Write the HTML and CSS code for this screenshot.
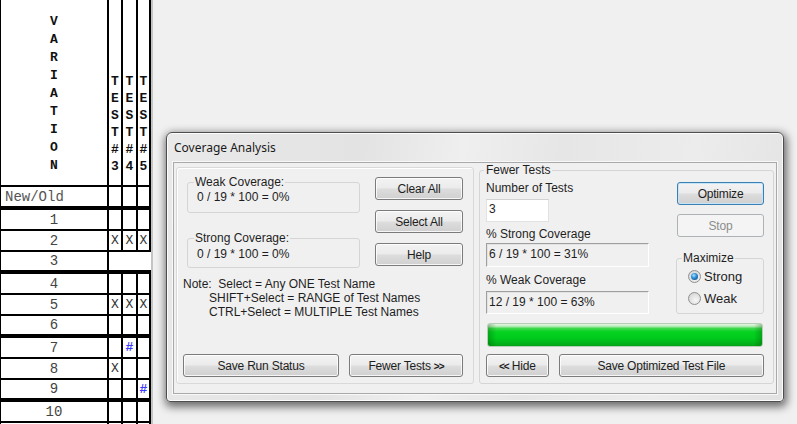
FILE: index.html
```html
<!DOCTYPE html>
<html>
<head>
<meta charset="utf-8">
<title>Coverage Analysis</title>
<link rel="stylesheet" href="styles.css">
</head>
<body>
<div class="screen">
  <table class="grid">
    <colgroup><col class="c-var"><col class="c-t1"><col class="c-t2"><col class="c-t3"></colgroup>
    <tr class="hdr">
      <th class="var">V<br>A<br>R<br>I<br>A<br>T<br>I<br>O<br>N</th>
      <th class="test">T<br>E<br>S<br>T<br>#<br>3</th>
      <th class="test">T<br>E<br>S<br>T<br>#<br>4</th>
      <th class="test">T<br>E<br>S<br>T<br>#<br>5</th>
    </tr>
    <tr class="r-head"><td class="label">New/Old</td><td></td><td></td><td></td></tr>
    <tr class="r-a"><td class="num">1</td><td></td><td></td><td></td></tr>
    <tr class="r-b"><td class="num">2</td><td class="x">X</td><td class="x">X</td><td class="x">X</td></tr>
    <tr class="r-c"><td class="num">3</td><td colspan="3" class="merged"></td></tr>
    <tr class="r-a"><td class="num">4</td><td></td><td></td><td></td></tr>
    <tr class="r-b"><td class="num">5</td><td class="x">X</td><td class="x">X</td><td class="x">X</td></tr>
    <tr class="r-c"><td class="num">6</td><td></td><td></td><td></td></tr>
    <tr class="r-a"><td class="num">7</td><td></td><td class="h">#</td><td></td></tr>
    <tr class="r-b"><td class="num">8</td><td class="x">X</td><td></td><td></td></tr>
    <tr class="r-c"><td class="num">9</td><td></td><td></td><td class="h">#</td></tr>
    <tr class="r-a"><td class="num">10</td><td></td><td></td><td></td></tr>
    <tr class="r-b"><td class="num"></td><td></td><td></td><td></td></tr>
  </table>

  <div class="dialog">
    <div class="titlebar">Coverage Analysis</div>
    <div class="client">
      <div class="panel">
        <div class="panel-top">
          <div class="cov-col">
            <fieldset class="cov weak"><legend>Weak Coverage:</legend><div class="val">0 / 19 * 100 = 0%</div></fieldset>
            <fieldset class="cov strong"><legend>Strong Coverage:</legend><div class="val">0 / 19 * 100 = 0%</div></fieldset>
          </div>
          <div class="btn-col">
            <button class="btn side">Clear All</button>
            <button class="btn side">Select All</button>
            <button class="btn side">Help</button>
          </div>
        </div>
        <div class="note">
          <div>Note:&nbsp; Select = Any ONE Test Name</div>
          <div class="ind">SHIFT+Select = RANGE of Test Names</div>
          <div class="ind">CTRL+Select = MULTIPLE Test Names</div>
        </div>
        <div class="panel-bottom">
          <button class="btn save-run">Save Run Status</button>
          <button class="btn fewer">Fewer Tests <b class="chev">&gt;&gt;</b></button>
        </div>
      </div>

      <fieldset class="fewer-group">
        <legend>Fewer Tests</legend>
        <div class="fg-top">
          <div class="fg-left">
            <div class="lbl first">Number of Tests</div>
            <div class="input">3</div>
            <div class="lbl l2">% Strong Coverage</div>
            <div class="sunken s1">6 / 19 * 100 = 31%</div>
            <div class="lbl l3">% Weak Coverage</div>
            <div class="sunken s2">12 / 19 * 100 = 63%</div>
          </div>
          <div class="fg-right">
            <button class="btn optimize">Optimize</button>
            <button class="btn stop" disabled>Stop</button>
            <fieldset class="maximize">
              <legend>Maximize</legend>
              <div class="radio-row"><span class="radio on"></span><span>Strong</span></div>
              <div class="radio-row r2"><span class="radio"></span><span>Weak</span></div>
            </fieldset>
          </div>
        </div>
        <div class="progress"></div>
        <div class="fg-bottom">
          <button class="btn hide"><b class="chev">&lt;&lt;</b> Hide</button>
          <button class="btn save-opt">Save Optimized Test File</button>
        </div>
      </fieldset>
    </div>
  </div>
</div>
</body>
</html>
```

FILE: styles.css
```css
html, body {
  margin: 0;
  padding: 0;
}
body {
  width: 797px;
  height: 424px;
  overflow: hidden;
  background: #f0f0f0;
}
.screen {
  position: relative;
  width: 797px;
  height: 424px;
  overflow: hidden;
}

/* ---------- grid ---------- */
.grid {
  border-collapse: separate;
  border-spacing: 0;
  table-layout: fixed;
  width: 151px;
  box-shadow: 2px 0 0 #c4c4c4;
  font-family: "Liberation Mono", "Courier New", monospace;
}
.grid th, .grid td {
  box-sizing: border-box;
  padding: 0;
  background: #fff;
  border-right: 2px solid #000;
  border-bottom: 2px solid #000;
  text-align: center;
  overflow: hidden;
}
.grid th:first-child, .grid td:first-child {
  border-left: 1px solid #000;
}
.c-var { width: 109px; }
.c-t1 { width: 14px; }
.c-t2 { width: 15px; }
.c-t3 { width: 13px; }

.hdr { height: 187px; }
.hdr th {
  vertical-align: bottom;
  font-weight: bold;
  font-size: 13px;
  color: #111;
  padding-bottom: 10px;
}
.hdr th.var { line-height: 18px; }
.hdr th.test { line-height: 17px; }

.r-head { height: 23px; }
.r-head td { border-bottom-width: 4px; }
.r-a, .r-b { height: 21px; }
.r-c { height: 22px; }
.r-c td { border-bottom-width: 4px; }
.grid td.merged { border-right: none; }

.grid td.label {
  text-align: left;
  padding-left: 4px;
  font-size: 14px;
  color: #555;
  line-height: 18px;
}
.grid td.num {
  font-size: 14px;
  color: #444;
  line-height: 18px;
}
.grid td.x {
  font-size: 13px;
  color: #333;
}
.grid td.h {
  font-size: 13px;
  color: #3b3bff;
  font-weight: bold;
}

/* ---------- dialog window ---------- */
.dialog {
  position: absolute;
  left: 166px;
  top: 132px;
  width: 618px;
  height: 270px;
  box-sizing: border-box;
  border: 1px solid #4e4e4e;
  border-radius: 6px 6px 4px 4px;
  padding: 0 6px 7px 6px;
  background: linear-gradient(100deg, #e9e9e9 0%, #e3e3e3 30%, #efefef 45%, #e6e6e6 60%, #ececec 80%, #e2e2e2 100%);
  box-shadow: inset 0 0 0 1px rgba(255,255,255,0.85), 1px 3px 8px 2px rgba(0,0,0,0.55);
  font-family: "Liberation Sans", Arial, sans-serif;
  font-size: 12px;
  color: #1e1e1e;
}
.titlebar {
  height: 29px;
  line-height: 29px;
  padding-left: 1px;
  font-family: "Noto Sans", "Open Sans", sans-serif;
  font-size: 12px;
  color: #1a1a1a;
}
.client {
  box-sizing: border-box;
  height: 232px;
  border: 1px solid #a9a9a9;
  box-shadow: 0 0 0 1px #f8f8f8;
  background: #f0f0f0;
  padding: 4px 2px 0 2px;
  display: flex;
  align-items: flex-start;
  gap: 5px;
}

/* left panel */
.panel {
  box-sizing: border-box;
  width: 298px;
  height: 217px;
  border: 1px solid #d9d9d9;
  border-radius: 3px;
  box-shadow: inset 1px 1px 0 #fff;
  padding: 7px 6px 6px 6px;
  display: flex;
  flex-direction: column;
}
.panel-top {
  display: flex;
  align-items: flex-start;
}
.cov-col {
  margin-left: 4px;
  width: 173px;
}
fieldset {
  margin: 0;
  min-width: 0;
  border: 1px solid #d5d5d5;
  border-radius: 3px;
}
legend {
  line-height: 14px;
  color: #1e1e1e;
}
.cov {
  box-sizing: border-box;
  width: 173px;
  padding: 1px 0 7px 9px;
}
.cov legend {
  padding: 0 1px;
  margin-left: -3px;
}
.cov.weak { padding-bottom: 8px; }
.cov.strong { margin-top: 18px; padding-top: 2px; padding-bottom: 6px; }
.val {
  line-height: 14px;
  white-space: pre;
}
.btn-col {
  margin-left: 15px;
  margin-top: 2px;
  display: flex;
  flex-direction: column;
  gap: 10px;
}

.btn {
  box-sizing: border-box;
  height: 23px;
  border: 1px solid #7b7b7b;
  border-radius: 3px;
  background: linear-gradient(#f3f3f3 0%, #ebebeb 48%, #dddddd 52%, #d0d0d0 100%);
  box-shadow: inset 0 0 0 1px rgba(255,255,255,0.8);
  font-family: "Liberation Sans", Arial, sans-serif;
  font-size: 12px;
  color: #1e1e1e;
  padding: 0;
  margin: 0;
  letter-spacing: -0.2px;
}
.btn.side { width: 88px; }
.chev { font-size: 10px; letter-spacing: -1px; }

.note {
  margin-top: 9px;
  line-height: 14px;
}
.note .ind { padding-left: 26px; }
.panel-bottom {
  margin-top: auto;
  display: flex;
  gap: 10px;
}
.save-run { width: 156px; }
.fewer { width: 114px; }

/* right group */
.fewer-group {
  box-sizing: border-box;
  width: 295px;
  margin-top: -4px;
  padding: 0 9px 6px 6px;
}
.fewer-group > legend {
  padding: 0 2px;
  margin-left: -2px;
}
.fg-top {
  display: flex;
  justify-content: space-between;
  align-items: flex-start;
}
.fg-left {
  width: 163px;
  display: flex;
  flex-direction: column;
}
.lbl { line-height: 14px; }
.lbl.first { margin-top: 4px; }
.input {
  box-sizing: border-box;
  width: 63px;
  height: 23px;
  margin-top: 4px;
  background: #fff;
  border: 1px solid #e2e2e2;
  border-top-color: #d2d2d2;
  padding-left: 2px;
  line-height: 19px;
}
.lbl.l2 { margin-top: 5px; }
.sunken {
  box-sizing: border-box;
  width: 163px;
  border: 1px solid;
  border-color: #9f9f9f #ffffff #ffffff #9f9f9f;
  box-shadow: inset 1px 1px 0 #e3e3e3;
  padding-left: 2px;
  white-space: pre;
}
.sunken.s1 { margin-top: 2px; height: 24px; line-height: 21px; }
.lbl.l3 { margin-top: 6px; }
.sunken.s2 { margin-top: 4px; height: 23px; line-height: 20px; }

.fg-right {
  width: 88px;
  display: flex;
  flex-direction: column;
}
.optimize, .stop {
  width: 87px;
  margin-left: 1px;
}
.optimize {
  margin-top: 5px;
  border-color: #3c7fb1;
  box-shadow: inset 0 0 0 1px #c4e5f8;
}
.stop {
  margin-top: 9px;
  border-color: #adb2b5;
  background: #f4f4f4;
  box-shadow: none;
  color: #8d8d8d;
}
.maximize {
  box-sizing: border-box;
  width: 88px;
  margin-top: 14px;
  padding: 4px 0 8px 11px;
}
.maximize legend {
  padding: 0 1px;
  margin-left: -6px;
}
.radio-row {
  display: flex;
  align-items: center;
  gap: 3px;
  height: 14px;
  font-size: 13px;
}
.radio-row.r2 { margin-top: 8px; }
.radio {
  box-sizing: border-box;
  width: 13px;
  height: 13px;
  border-radius: 50%;
  border: 1px solid #8f8f8f;
  background: radial-gradient(circle at 60% 65%, #f7f7f7 0%, #dedede 60%, #cfcfcf 100%);
  position: relative;
  flex: none;
}
.radio.on::after {
  content: "";
  position: absolute;
  left: 2px;
  top: 2px;
  width: 7px;
  height: 7px;
  border-radius: 50%;
  background: radial-gradient(circle at 40% 35%, #b6e6ff 0%, #3a9be0 35%, #135e9c 75%, #0b3a66 100%);
}

.progress {
  box-sizing: border-box;
  width: 276px;
  height: 24px;
  margin-top: 9px;
  margin-left: 1px;
  border: 1px solid #b6cdb6;
  border-radius: 3px;
  background:
    linear-gradient(to right, rgba(0,60,0,0.28) 0%, rgba(0,60,0,0) 3%, rgba(0,60,0,0) 97%, rgba(0,60,0,0.28) 100%),
    linear-gradient(#e2f7e2 0%, #bdedbd 10%, #3fd84e 20%, #06d221 35%, #00cc1d 62%, #00b919 82%, #04a316 100%);
}
.fg-bottom {
  margin-top: 7px;
  display: flex;
  gap: 10px;
}
.hide { width: 63px; }
.save-opt { width: 207px; }
```
